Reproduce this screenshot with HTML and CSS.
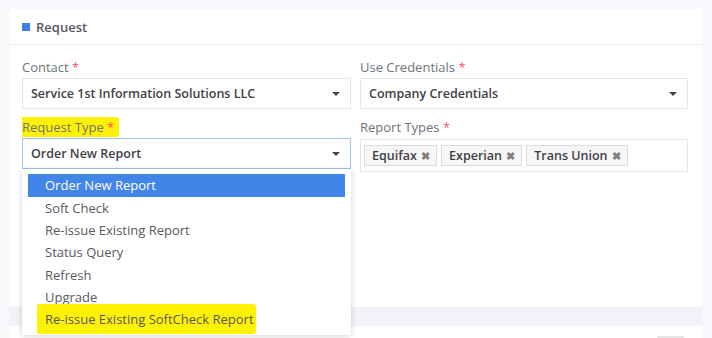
FILE: index.html
```html
<!DOCTYPE html>
<html lang="en">
<head>
  <meta charset="UTF-8" />
  <title>Request</title>
  <link rel="stylesheet" href="styles.css">
</head>
<body>
<div class="page">
  <div class="card">
    <div class="card-head">
      <span class="head-mark"></span>
      <span class="head-title">Request</span>
    </div>
    <div class="card-body">
      <div class="form-grid">
        <div class="field">
          <label class="field-label">Contact <span class="req">*</span></label>
          <div class="select">
            <span class="select-value">Service 1st Information Solutions LLC</span>
            <span class="caret"></span>
          </div>
        </div>
        <div class="field">
          <label class="field-label">Use Credentials <span class="req">*</span></label>
          <div class="select">
            <span class="select-value">Company Credentials</span>
            <span class="caret"></span>
          </div>
        </div>
        <div class="field field-open">
          <label class="field-label"><span class="marker marker-label">Request Type <span class="req">*</span></span></label>
          <div class="select select-focus">
            <span class="select-value">Order New Report</span>
            <span class="caret"></span>
          </div>
          <ul class="dropdown">
            <li class="option option-active">Order New Report</li>
            <li class="option">Soft Check</li>
            <li class="option">Re-issue Existing Report</li>
            <li class="option">Status Query</li>
            <li class="option">Refresh</li>
            <li class="option">Upgrade</li>
            <li class="option"><span class="marker marker-option">Re-issue Existing SoftCheck Report</span></li>
          </ul>
        </div>
        <div class="field">
          <label class="field-label">Report Types <span class="req">*</span></label>
          <div class="tags">
            <span class="tag">Equifax <span class="tag-x">&#10006;</span></span>
            <span class="tag">Experian <span class="tag-x">&#10006;</span></span>
            <span class="tag">Trans Union <span class="tag-x">&#10006;</span></span>
          </div>
        </div>
      </div>
    </div>
  </div>
  <div class="gap-band"></div>
  <div class="card card-next">
    <span class="next-btn"></span>
  </div>
</div>
</body>
</html>
```

FILE: styles.css
```css
* {
  margin: 0;
  padding: 0;
  box-sizing: border-box;
}
body {
  background: #f7f8fc;
  font-family: "Open Sans", "Noto Sans", sans-serif;
  font-size: 13px;
  color: #575962;
  overflow: hidden;
}
.page {
  padding: 9px 10px 0 9px;
}
.card {
  background: #fff;
}
.card-head {
  height: 36px;
  display: flex;
  align-items: center;
  padding-left: 13px;
  border-bottom: 1px solid #ebedf2;
}
.head-mark {
  width: 8px;
  height: 8px;
  background: #3d80e6;
  margin-right: 6px;
}
.head-title {
  font-weight: 600;
  color: #575962;
}
.card-body {
  padding: 14px 14px 0 13px;
  height: 262px;
}
.form-grid {
  display: grid;
  grid-template-columns: 329px 328px;
  column-gap: 9px;
}
.field {
  position: relative;
  margin-bottom: 10px;
}
.field-label {
  display: block;
  height: 19px;
  line-height: 16px;
  color: #6f727d;
}
.req {
  color: #f4516c;
}
.marker {
  background: #fff200;
}
.marker-label {
  display: inline-block;
  padding: 2px 5px 2px 0;
  margin-top: -5px;
  border-radius: 1px 3px 2px 1px;
}
.select {
  height: 31px;
  border: 1px solid #e2e5ec;
  display: flex;
  align-items: center;
  justify-content: space-between;
  padding: 0 10px 0 8px;
}
.select-focus {
  border-color: #9ec3f3;
}
.select-value {
  font-size: 12.5px;
  font-weight: 600;
  color: #3f4047;
}
.caret {
  width: 0;
  height: 0;
  border-left: 4px solid transparent;
  border-right: 4px solid transparent;
  border-top: 4px solid #444;
}
.dropdown {
  position: absolute;
  top: 50px;
  left: 0;
  width: 329px;
  height: 166px;
  list-style: none;
  background: #fff;
  padding: 5px 6px;
  box-shadow: 0 1px 6px rgba(0, 0, 0, 0.18);
  z-index: 2;
}
.option {
  height: 22.2px;
  line-height: 22px;
  padding-left: 17px;
  color: #575962;
}
.option-active {
  height: 23px;
  background: #4285e8;
  color: #fff;
}
.marker-option {
  padding: 6px 2px 6px 8px;
  margin-left: -8px;
  border-radius: 2px 4px 3px 2px;
}
.tags {
  height: 33px;
  margin-top: 1px;
  border: 1px solid #e2e5ec;
  display: flex;
  align-items: center;
  gap: 4px;
  padding-left: 3px;
}
.tag {
  height: 21px;
  line-height: 19px;
  padding: 0 6px 0 7px;
  border: 1px solid #dcdcdc;
  background: #f7f7f7;
  font-size: 12.5px;
  font-weight: 600;
  color: #3f4047;
}
.tag-x {
  font-size: 11px;
  color: #808080;
  margin-left: 1px;
}
.gap-band {
  height: 19px;
  background: #f2f3f8;
}
.card-next {
  height: 20px;
  position: relative;
}
.next-btn {
  position: absolute;
  right: 18px;
  top: 10px;
  width: 27px;
  height: 4px;
  background: #e5e5e5;
}
```
